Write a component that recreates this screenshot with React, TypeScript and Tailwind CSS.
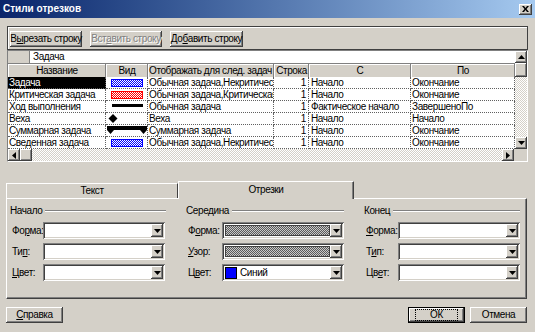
import React from 'react';

const raised =
  'shadow-[inset_-1px_-1px_#404040,inset_1px_1px_#ffffff,inset_-2px_-2px_#808080,inset_2px_2px_#d4d0c8]';
const sunken =
  'shadow-[inset_1px_1px_#808080,inset_-1px_-1px_#ffffff,inset_2px_2px_#404040,inset_-2px_-2px_#d4d0c8]';
const dither = 'bg-[repeating-conic-gradient(#ffffff_0_25%,#d4d0c8_0_50%)] bg-size-[2px_2px]';

function Arrow({ dir }: { dir: 'up' | 'down' | 'left' | 'right' }) {
  const d = {
    down: 'M0 0h7L3.5 4z',
    up: 'M0 4h7L3.5 0z',
    left: 'M4 0v7L0 3.5z',
    right: 'M0 0v7L4 3.5z',
  }[dir];
  const vert = dir === 'up' || dir === 'down';
  return (
    <svg width={vert ? 7 : 4} height={vert ? 4 : 7} viewBox={vert ? '0 0 7 4' : '0 0 4 7'}>
      <path d={d} fill="#000" />
    </svg>
  );
}

function ScrollBtn({ dir }: { dir: 'up' | 'down' | 'left' | 'right' }) {
  return (
    <div className={`w-[12px] h-[12px] shrink-0 bg-[#d4d0c8] flex items-center justify-center ${raised}`}>
      <Arrow dir={dir} />
    </div>
  );
}

function Btn({ children, w, disabled }: { children: React.ReactNode; w: string; disabled?: boolean }) {
  return (
    <div
      className={`${w} h-[16px] bg-[#d4d0c8] flex items-center justify-center whitespace-nowrap ${raised} ${
        disabled ? 'text-[#808080] [text-shadow:1px_1px_#ffffff]' : 'text-black'
      }`}
    >
      {children}
    </div>
  );
}

function Combo({ children }: { children?: React.ReactNode }) {
  return (
    <div className={`w-[122px] h-[17px] bg-white p-[2px] flex ${sunken}`}>
      <div className="flex-1 flex items-center overflow-hidden">{children}</div>
      <div className={`w-[12px] h-full bg-[#d4d0c8] flex items-center justify-center ${raised}`}>
        <Arrow dir="down" />
      </div>
    </div>
  );
}

function Hatch() {
  return (
    <div className="w-[108px] h-[11px] ml-[1px] border border-[#404040] bg-[repeating-conic-gradient(#5a5a5a_0_25%,#c8c8c8_0_50%)] bg-size-[2px_2px]" />
  );
}

function Group({
  title,
  labelW,
  w,
  rows,
}: {
  title: string;
  labelW: string;
  w: string;
  rows: { label: React.ReactNode; value?: React.ReactNode }[];
}) {
  return (
    <div className={`${w} flex flex-col`}>
      <div className="h-[12px] flex items-center gap-[3px]">
        <span className="leading-[12px]">{title}</span>
        <div className="flex-1 h-[2px] border-t border-[#808080] border-b border-b-white" />
      </div>
      <div className="mt-[5px] flex flex-col gap-[4px]">
        {rows.map((r, i) => (
          <div key={i} className="flex items-center h-[17px]">
            <div className={`${labelW} pl-[2px] whitespace-nowrap`}>{r.label}</div>
            <Combo>{r.value}</Combo>
          </div>
        ))}
      </div>
    </div>
  );
}

function Vid({ kind }: { kind: string }) {
  if (kind === 'blue' || kind === 'red') {
    const c = kind === 'blue' ? '#0000ff' : '#ff0000';
    const id = `p-${kind}`;
    return (
      <svg width="42" height="11">
        <defs>
          <pattern id={id} width="2" height="2" patternUnits="userSpaceOnUse">
            <rect width="2" height="2" fill="#ffffff" />
            <rect width="1" height="1" fill={c} />
            <rect x="1" y="1" width="1" height="1" fill={c} />
          </pattern>
        </defs>
        <rect x="5.5" y="2.5" width="31" height="7" fill={`url(#${id})`} stroke={c} />
      </svg>
    );
  }
  if (kind === 'bar')
    return (
      <svg width="42" height="11">
        <rect x="6" y="3" width="31" height="3" fill="#000" />
      </svg>
    );
  if (kind === 'diamond')
    return (
      <svg width="42" height="11">
        <path d="M7 1L11.5 5.5L7 10L2.5 5.5Z" fill="#000" />
      </svg>
    );
  return (
    <svg width="42" height="11">
      <path d="M1 1H41V5L37.5 9L34 5H8L4.5 9L1 5Z" fill="#000" />
    </svg>
  );
}

const rows = [
  { name: 'Задача', vid: 'blue', show: 'Обычная задача,Некритическая', c: 'Начало', p: 'Окончание', sel: true },
  { name: 'Критическая задача', vid: 'red', show: 'Обычная задача,Критическая', c: 'Начало', p: 'Окончание' },
  { name: 'Ход выполнения', vid: 'bar', show: 'Обычная задача', c: 'Фактическое начало', p: 'ЗавершеноПо' },
  { name: 'Веха', vid: 'diamond', show: 'Веха', c: 'Начало', p: 'Начало' },
  { name: 'Суммарная задача', vid: 'summary', show: 'Суммарная задача', c: 'Начало', p: 'Окончание' },
  { name: 'Сведенная задача', vid: 'blue', show: 'Обычная задача,Некритическая', c: 'Начало', p: 'Окончание' },
];

const cols = [
  { w: 'w-[98px]', title: 'Название', align: 'justify-center' },
  { w: 'w-[42px]', title: 'Вид', align: 'justify-center' },
  { w: 'w-[126px]', title: 'Отображать для след. задач', align: 'justify-start' },
  { w: 'w-[35px]', title: 'Строка', align: 'justify-center' },
  { w: 'w-[102px]', title: 'С', align: 'justify-center' },
  { w: 'w-[104px]', title: 'По', align: 'justify-center' },
];

const cell = 'h-[12px] border-r border-b border-dotted border-[#606060] overflow-hidden whitespace-nowrap flex items-center shrink-0';

export default function App() {
  return (
    <div className="w-[537px] h-[332px] bg-[#d4d0c8] text-[10px] tracking-[-0.4px] leading-[12px] text-black font-['Liberation_Sans',Arial,sans-serif] flex flex-col overflow-hidden border-r-2 border-r-[#ffffff]">
      {/* Заголовок */}
      <div className="h-[18px] shrink-0 bg-linear-to-r from-[#0a246a] to-[#a6caf0] flex items-center justify-between pl-[3px] pr-[3px]">
        <span className="text-white font-bold tracking-[0px]">Стили отрезков</span>
        <div className={`w-[13px] h-[11px] bg-[#d4d0c8] flex items-center justify-center ${raised}`}>
          <svg width="7" height="6" viewBox="0 0 7 6">
            <path d="M0 0h2l1.5 2 1.5-2h2L4.5 3 7 6H5L3.5 4 2 6H0l2.5-3z" fill="#000" />
          </svg>
        </div>
      </div>

      <div className="flex flex-col px-[6px] mt-[8px]">
        {/* Панель кнопок */}
        <div className="ml-[1px] w-[521px] h-[24px] border border-[#404040] shadow-[inset_1px_1px_#ffffff] flex items-center gap-[8px] pl-[2px] pt-[1px]">
          <Btn w="w-[72px]">
            В<u>ы</u>резать строку
          </Btn>
          <Btn w="w-[72px]" disabled>
            Вст<u>а</u>вить строку
          </Btn>
          <Btn w="w-[73px]">
            До<u>б</u>авить строку
          </Btn>
        </div>

        {/* Таблица */}
        <div className="ml-[1px] w-[521px] h-[112px] border-l border-t border-[#808080] border-r border-b border-r-white border-b-white flex flex-col">
          <div className="flex">
            <div className="flex flex-col w-[507px]">
              <div className="h-[12px] flex bg-white">
                <div className="w-[22px] bg-[#d4d0c8] border-r border-[#808080]" />
                <div className="pl-[3px] leading-[12px]">Задача</div>
              </div>
              <div className="h-[14px] flex bg-[#d4d0c8] border-t border-[#808080]">
                {cols.map((c) => (
                  <div
                    key={c.title}
                    className={`${c.w} shrink-0 flex items-center ${c.align} border-r border-[#808080] shadow-[inset_1px_1px_#ffffff] whitespace-nowrap overflow-hidden pl-[1px]`}
                  >
                    {c.title}
                  </div>
                ))}
              </div>
              {rows.map((r) => (
                <div key={r.name} className="flex bg-white">
                  <div className={`${cell} w-[98px] pl-[1px] ${r.sel ? 'bg-black text-white' : ''}`}>{r.name}</div>
                  <div className={`${cell} w-[42px]`}>
                    <Vid kind={r.vid} />
                  </div>
                  <div className={`${cell} w-[126px] pl-[1px]`}>{r.show}</div>
                  <div className={`${cell} w-[35px] justify-end pr-[2px]`}>1</div>
                  <div className={`${cell} w-[102px] pl-[2px]`}>{r.c}</div>
                  <div className={`${cell} w-[104px] pl-[1px]`}>{r.p}</div>
                </div>
              ))}
            </div>
            {/* Вертикальная прокрутка */}
            <div className={`w-[13px] flex flex-col ${dither}`}>
              <ScrollBtn dir="up" />
              <div className={`h-[14px] bg-[#d4d0c8] ${raised}`} />
              <div className="flex-1" />
              <ScrollBtn dir="down" />
            </div>
          </div>
          {/* Горизонтальная прокрутка */}
          <div className="flex h-[12px]">
            <div className={`w-[507px] flex ${dither}`}>
              <ScrollBtn dir="left" />
              <div className={`w-[12px] bg-[#d4d0c8] ${raised}`} />
              <div className="flex-1" />
              <ScrollBtn dir="right" />
            </div>
            <div className="w-[13px] bg-[#d4d0c8]" />
          </div>
        </div>

        {/* Вкладки */}
        <div className="mt-[19px] w-[521px] flex items-end h-[17px]">
          <div className="w-[172px] h-[15px] border-t border-l border-white border-r border-r-[#404040] flex items-center justify-center">
            Текст
          </div>
          <div className="w-[176px] h-[18px] mb-[-1px] relative z-10 bg-[#d4d0c8] border-t border-l border-white border-r border-r-[#404040] shadow-[inset_-1px_0_#808080] flex items-center justify-center pb-[2px]">
            Отрезки
          </div>
        </div>
        <div className="w-[521px] h-[101px] border-t border-l border-white border-r border-b border-r-[#404040] border-b-[#404040] shadow-[inset_-1px_-1px_#808080] flex pl-[3px] pt-[6px] gap-[20px]">
          <Group
            title="Начало"
            w="w-[156px]"
            labelW="w-[33px]"
            rows={[
              { label: <>Фо<u>р</u>ма:</> },
              { label: <>Ти<u>п</u>:</> },
              { label: <><u>Ц</u>вет:</> },
            ]}
          />
          <Group
            title="Середина"
            w="w-[158px]"
            labelW="w-[36px]"
            rows={[
              { label: <>Ф<u>о</u>рма:</>, value: <Hatch /> },
              { label: <><u>У</u>зор:</>, value: <Hatch /> },
              {
                label: <>Ц<u>в</u>ет:</>,
                value: (
                  <div className="flex items-center gap-[3px] pl-[1px]">
                    <div className="w-[12px] h-[12px] bg-[#0000ff] border border-black" />
                    <span>Синий</span>
                  </div>
                ),
              },
            ]}
          />
          <Group
            title="Конец"
            w="w-[156px]"
            labelW="w-[34px]"
            rows={[
              { label: <><u>Ф</u>орма:</> },
              { label: <>Т<u>и</u>п:</> },
              { label: <>Цв<u>е</u>т:</> },
            ]}
          />
        </div>

        {/* Кнопки */}
        <div className="mt-[8px] w-[521px] flex justify-between">
          <Btn w="w-[57px]">
            <u>С</u>правка
          </Btn>
          <div className="flex gap-[5px]">
            <div className="w-[57px] h-[16px] border border-black">
              <div className={`w-full h-full bg-[#d4d0c8] flex items-center justify-center ${raised}`}>
                <div className="border border-dotted border-black px-[14px] leading-[10px]">ОК</div>
              </div>
            </div>
            <Btn w="w-[57px]">Отмена</Btn>
          </div>
        </div>
      </div>
    </div>
  );
}
